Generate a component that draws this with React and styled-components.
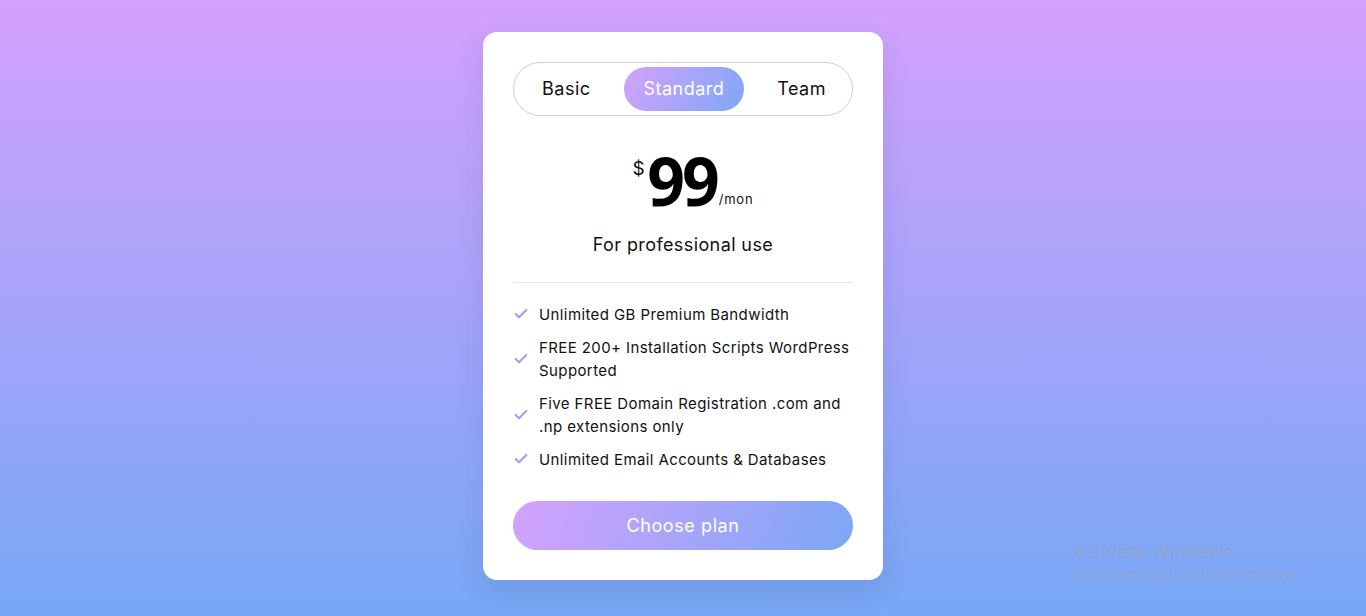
import styled, { createGlobalStyle } from 'styled-components'
import { Check } from 'lucide-react'

const GlobalStyle = createGlobalStyle`
  * { box-sizing: border-box; }
  html, body { margin: 0; padding: 0; }
  body {
    font-family: 'Inter', 'Noto Sans', sans-serif;
    color: #111;
    letter-spacing: 0.4px;
  }
`

const Page = styled.div`
  position: relative;
  width: 100%;
  height: 616px;
  overflow: hidden;
  background: linear-gradient(to bottom, #d4a1fd 0%, #77a7f6 100%);
  display: flex;
  justify-content: center;
  padding-top: 32px;
`

const Card = styled.div`
  width: 400px;
  height: 548px;
  background: #fff;
  border-radius: 14px;
  box-shadow: 0 10px 30px rgba(40, 40, 90, 0.12);
  padding: 30px;
  display: flex;
  flex-direction: column;
`

const Toggle = styled.div`
  height: 55px;
  border: 1px solid #cfcfcf;
  border-radius: 28px;
  display: flex;
  align-items: center;
  justify-content: space-between;
  padding: 0 8px 0 10px;
`

const Tab = styled.button`
  border: none;
  height: 44px;
  padding: 0 18px;
  border-radius: 22px;
  font-family: 'Inter', 'Noto Sans', sans-serif;
  font-size: 18px;
  letter-spacing: 0.5px;
  cursor: pointer;
  color: ${p => (p.$active ? '#fff' : '#111')};
  background: ${p => (p.$active ? 'linear-gradient(120deg, #d3a2fd 0%, #7fa7f6 100%)' : 'transparent')};
  width: ${p => (p.$active ? '120px' : 'auto')};
`

const PriceRow = styled.div`
  margin-top: 37px;
  display: flex;
  justify-content: center;
  align-items: flex-end;
  line-height: 1;
  padding-left: 20px;
`

const Currency = styled.span`
  align-self: flex-start;
  font-size: 19px;
  margin-top: 6px;
  margin-right: 2px;
`

const Amount = styled.span`
  font-family: 'Open Sans', sans-serif;
  font-weight: 700;
  font-size: 66px;
  letter-spacing: -3px;
  line-height: 55px;
  color: #000;
`

const Period = styled.span`
  font-size: 13px;
  letter-spacing: 0.8px;
  margin-bottom: 2px;
  margin-left: 2px;
`

const Subtitle = styled.div`
  margin-top: 26px;
  text-align: center;
  font-size: 18px;
  color: #111;
`

const Divider = styled.hr`
  border: none;
  border-top: 1px solid #e6e6e6;
  margin: 27px 0 20px;
`

const Features = styled.ul`
  list-style: none;
  margin: 0;
  padding: 0;
  display: flex;
  flex-direction: column;
  gap: 10px;
`

const Feature = styled.li`
  display: flex;
  align-items: center;
  gap: 10px;
  font-size: 15px;
  line-height: 23px;
  color: #111;

  svg { flex-shrink: 0; }
`

const ChooseButton = styled.button`
  margin-top: 30px;
  height: 50px;
  border: none;
  border-radius: 25px;
  background: linear-gradient(110deg, #d4a2fd 0%, #7ca7f6 100%);
  color: #fff;
  font-family: 'Inter', 'Noto Sans', sans-serif;
  font-size: 18px;
  letter-spacing: 0.6px;
  cursor: pointer;
`

const Watermark = styled.div`
  position: absolute;
  left: 1073px;
  top: 540px;
  font-family: 'DejaVu Sans', sans-serif;
  letter-spacing: 0;
  color: rgba(150, 160, 190, 0.75);
`

const WatermarkTitle = styled.div`
  font-size: 18px;
  line-height: 24px;
`

const WatermarkText = styled.div`
  font-size: 13px;
  line-height: 22px;
`

const features = [
  'Unlimited GB Premium Bandwidth',
  'FREE 200+ Installation Scripts WordPress Supported',
  'Five FREE Domain Registration .com and .np extensions only',
  'Unlimited Email Accounts & Databases',
]

const App = () => {
  return (
    <>
      <GlobalStyle />
      <Page>
        <Card>
          <Toggle>
            <Tab>Basic</Tab>
            <Tab $active>Standard</Tab>
            <Tab>Team</Tab>
          </Toggle>
          <PriceRow>
            <Currency>$</Currency>
            <Amount>99</Amount>
            <Period>/mon</Period>
          </PriceRow>
          <Subtitle>For professional use</Subtitle>
          <Divider />
          <Features>
            {features.map(f => (
              <Feature key={f}>
                <Check size={16} strokeWidth={3.2} color="#a99cf5" />
                <span>{f}</span>
              </Feature>
            ))}
          </Features>
          <ChooseButton>Choose plan</ChooseButton>
        </Card>
        <Watermark>
          <WatermarkTitle>Activate Windows</WatermarkTitle>
          <WatermarkText>Go to Settings to activate Windows.</WatermarkText>
        </Watermark>
      </Page>
    </>
  )
}

export default App
